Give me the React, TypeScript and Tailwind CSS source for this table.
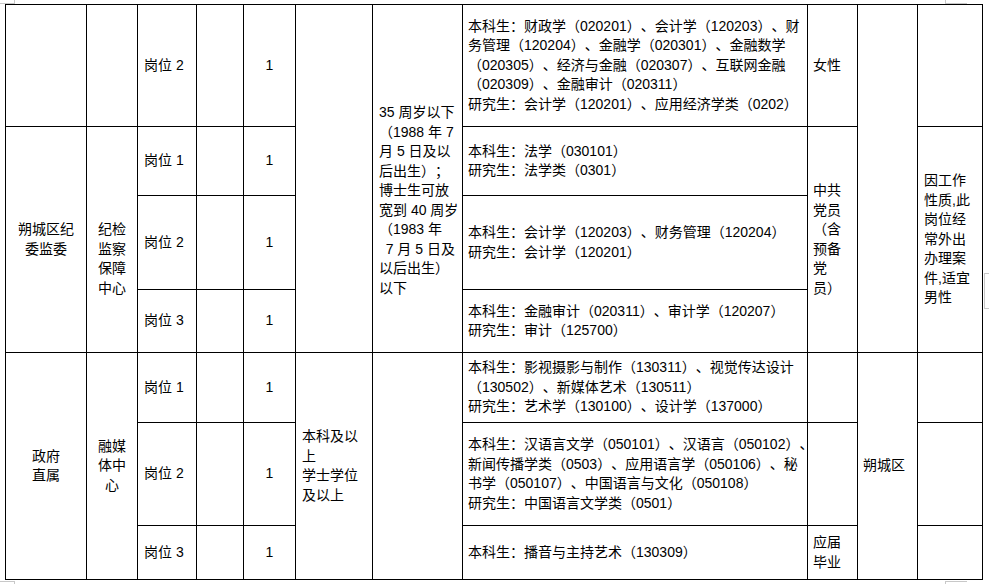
import React from "react";

const Lines = ({ lines }: { lines: string[] }) => (
  <div className="whitespace-nowrap">
    {lines.map((l, i) => (
      <div key={i}>{l}</div>
    ))}
  </div>
);

export default function App() {
  const base =
    "border-r border-b border-black flex items-center text-[14px] leading-[19.5px] text-black";
  return (
    <div className="relative w-[989px] h-[584px] bg-white overflow-hidden font-['Liberation_Sans','Noto_Sans_CJK_SC',sans-serif] [text-spacing-trim:space-all]">
      <div className="ml-[5px] mt-[4px] w-max grid grid-cols-[81px_51px_59px_47px_52px_77px_90px_345px_50px_60px_65px] grid-rows-[122px_69px_94px_63px_70px_103px_54px] border-l border-t border-black">
        {/* Row 1 */}
        <div className={`${base} col-start-1 row-start-1`} />
        <div className={`${base} col-start-2 row-start-1`} />
        <div className={`${base} col-start-3 row-start-1 pl-[6px]`}>岗位 2</div>
        <div className={`${base} col-start-4 row-start-1`} />
        <div className={`${base} col-start-5 row-start-1 justify-center`}>1</div>
        <div className={`${base} col-start-6 row-start-1 row-span-4`} />
        <div className={`border-r border-b border-black text-[14px] leading-[19.5px] text-black col-start-7 row-start-1 row-span-4 pl-[6px] pt-[98px]`}>
          <Lines
            lines={[
              "35 周岁以下",
              "（1988 年 7",
              "月 5 日及以",
              "后出生）；",
              "博士生可放",
              "宽到 40 周岁",
              "（1983 年",
              "\u2009 7 月 5 日及",
              "以后出生）",
              "以下",
            ]}
          />
        </div>
        <div className={`${base} col-start-8 row-start-1 pl-[5px]`}>
          <Lines
            lines={[
              "本科生：财政学（020201）、会计学（120203）、财",
              "务管理（120204）、金融学（020301）、金融数学",
              "（020305）、经济与金融（020307）、互联网金融",
              "（020309）、金融审计（020311）",
              "研究生：会计学（120201）、应用经济学类（0202）",
            ]}
          />
        </div>
        <div className={`${base} col-start-9 row-start-1 pl-[5px]`}>女性</div>
        <div className={`${base} col-start-10 row-start-1 row-span-4`} />
        <div className={`${base} col-start-11 row-start-1`} />

        {/* Rows 2-4 */}
        <div className={`${base} col-start-1 row-start-2 row-span-3 justify-center text-center`}>
          <Lines lines={["朔城区纪", "委监委"]} />
        </div>
        <div className={`border-r border-b border-black text-[14px] leading-[19.5px] text-black col-start-2 row-start-2 row-span-3 text-center pt-[93px]`}>
          <Lines lines={["纪检", "监察", "保障", "中心"]} />
        </div>
        <div className={`${base} col-start-3 row-start-2 pl-[6px]`}>岗位 1</div>
        <div className={`${base} col-start-4 row-start-2`} />
        <div className={`${base} col-start-5 row-start-2 justify-center`}>1</div>
        <div className={`${base} col-start-8 row-start-2 pl-[5px]`}>
          <Lines lines={["本科生：法学（030101）", "研究生：法学类（0301）"]} />
        </div>
        <div className={`${base} col-start-9 row-start-2 row-span-3 pl-[5px]`}>
          <Lines lines={["中共", "党员", "（含", "预备", "党", "员）"]} />
        </div>
        <div className={`${base} col-start-11 row-start-2 row-span-3 pl-[6px]`}>
          <Lines
            lines={["因工作", "性质,此", "岗位经", "常外出", "办理案", "件,适宜", "男性"]}
          />
        </div>

        <div className={`${base} col-start-3 row-start-3 pl-[6px]`}>岗位 2</div>
        <div className={`${base} col-start-4 row-start-3`} />
        <div className={`${base} col-start-5 row-start-3 justify-center`}>1</div>
        <div className={`${base} col-start-8 row-start-3 pl-[5px]`}>
          <Lines
            lines={["本科生：会计学（120203）、财务管理（120204）", "研究生：会计学（120201）"]}
          />
        </div>

        <div className={`${base} col-start-3 row-start-4 pl-[6px]`}>岗位 3</div>
        <div className={`${base} col-start-4 row-start-4`} />
        <div className={`${base} col-start-5 row-start-4 justify-center`}>1</div>
        <div className={`${base} col-start-8 row-start-4 pl-[5px]`}>
          <Lines
            lines={["本科生：金融审计（020311）、审计学（120207）", "研究生：审计（125700）"]}
          />
        </div>

        {/* Rows 5-7 */}
        <div className={`${base} col-start-1 row-start-5 row-span-3 justify-center text-center`}>
          <Lines lines={["政府", "直属"]} />
        </div>
        <div className={`${base} col-start-2 row-start-5 row-span-3 justify-center text-center`}>
          <Lines lines={["融媒", "体中", "心"]} />
        </div>
        <div className={`${base} col-start-3 row-start-5 pl-[6px]`}>岗位 1</div>
        <div className={`${base} col-start-4 row-start-5`} />
        <div className={`${base} col-start-5 row-start-5 justify-center`}>1</div>
        <div className={`${base} col-start-6 row-start-5 row-span-3 pl-[6px]`}>
          <Lines lines={["本科及以", "上", "学士学位", "及以上"]} />
        </div>
        <div className={`${base} col-start-7 row-start-5 row-span-3`} />
        <div className={`${base} col-start-8 row-start-5 pl-[5px]`}>
          <Lines
            lines={[
              "本科生：影视摄影与制作（130311）、视觉传达设计",
              "（130502）、新媒体艺术（130511）",
              "研究生：艺术学（130100）、设计学（137000）",
            ]}
          />
        </div>
        <div className={`${base} col-start-9 row-start-5`} />
        <div className={`${base} col-start-10 row-start-5 row-span-3 pl-[5px]`}>朔城区</div>
        <div className={`${base} col-start-11 row-start-5`} />

        <div className={`${base} col-start-3 row-start-6 pl-[6px]`}>岗位 2</div>
        <div className={`${base} col-start-4 row-start-6`} />
        <div className={`${base} col-start-5 row-start-6 justify-center`}>1</div>
        <div className={`${base} col-start-8 row-start-6 pl-[5px]`}>
          <Lines
            lines={[
              "本科生：汉语言文学（050101）、汉语言（050102）、",
              "新闻传播学类（0503）、应用语言学（050106）、秘",
              "书学（050107）、中国语言与文化（050108）",
              "研究生：中国语言文学类（0501）",
            ]}
          />
        </div>
        <div className={`${base} col-start-9 row-start-6`} />
        <div className={`${base} col-start-11 row-start-6`} />

        <div className={`${base} col-start-3 row-start-7 pl-[6px]`}>岗位 3</div>
        <div className={`${base} col-start-4 row-start-7`} />
        <div className={`${base} col-start-5 row-start-7 justify-center`}>1</div>
        <div className={`${base} col-start-8 row-start-7 pl-[5px]`}>
          <Lines lines={["本科生：播音与主持艺术（130309）"]} />
        </div>
        <div className={`${base} col-start-9 row-start-7 pl-[5px]`}>
          <Lines lines={["应届", "毕业"]} />
        </div>
        <div className={`${base} col-start-11 row-start-7`} />
      </div>

      {/* page corner marks */}
      <div className="absolute left-0 top-0 w-[15px] h-[4px] border-r border-b border-[#c8c8c8]" />
      <div className="absolute left-[945px] top-0 w-[22px] h-[4px] border-l border-b border-[#c8c8c8]" />
      <div className="absolute left-[984px] top-[273px] w-[6px] h-[36px] border-l border-t border-b border-[#c8c8c8]" />
      <div className="absolute left-0 top-[581px] w-[15px] h-[4px] border-r border-t border-[#c8c8c8]" />
      <div className="absolute left-[945px] top-[581px] w-[22px] h-[4px] border-l border-t border-[#c8c8c8]" />
    </div>
  );
}
